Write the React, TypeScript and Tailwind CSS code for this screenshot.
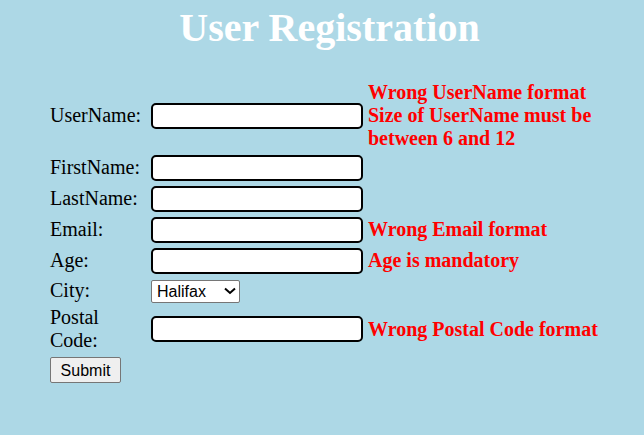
import { useState } from 'react';

const serif = "font-['Liberation_Serif','Times_New_Roman',serif]";
const sans = "font-['Liberation_Sans',Arial,sans-serif]";

type Field = {
    label: string;
    name: string;
    error?: string;
    height: string;
};

const fields: Field[] = [
    { label: 'UserName:', name: 'username', error: 'Wrong UserName format Size of UserName must be between 6 and 12', height: 'h-[71px]' },
    { label: 'FirstName:', name: 'firstname', height: 'h-[29px]' },
    { label: 'LastName:', name: 'lastname', height: 'h-[29px]' },
    { label: 'Email:', name: 'email', error: 'Wrong Email format', height: 'h-[29px]' },
    { label: 'Age:', name: 'age', error: 'Age is mandatory', height: 'h-[29px]' },
];

function TextInput({ name }: { name: string }) {
    return (
        <input
            name={name}
            type="text"
            className="w-[212px] h-[26px] bg-white border-2 border-black rounded-[5px] px-1 text-[13px] outline-none"
        />
    );
}

export default function App() {
    const [city, setCity] = useState('Halifax');

    return (
        <div className={`min-h-screen w-full bg-[#add8e6] text-black ${serif} text-[20px] leading-[23px]`}>
            <h1 className="pt-[5px] pl-[15px] text-center text-[40px] leading-[46px] font-bold text-white">
                User Registration
            </h1>

            <form className="mt-[29px] ml-[50px] flex flex-col gap-[2px]" onSubmit={(e) => e.preventDefault()}>
                {fields.map((f) => (
                    <div key={f.name} className={`flex items-center ${f.height}`}>
                        <label className="w-[101px] shrink-0">{f.label}</label>
                        <TextInput name={f.name} />
                        {f.error && (
                            <span className="ml-[5px] w-[240px] font-bold text-[#ff0000]">
                                {f.name === 'username' ? (
                                    <>
                                        Wrong UserName format<br />
                                        Size of UserName must be between 6 and 12
                                    </>
                                ) : (
                                    f.error
                                )}
                            </span>
                        )}
                    </div>
                ))}

                {/* City */}
                <div className="flex items-center h-[27px]">
                    <label className="w-[101px] shrink-0">City:</label>
                    <div className="relative">
                        <select
                            value={city}
                            onChange={(e) => setCity(e.target.value)}
                            className={`appearance-none w-[89px] h-[23px] bg-white border border-[#767676] rounded-[2px] pl-[5px] text-[16px] leading-[21px] ${sans}`}
                        >
                            <option>Halifax</option>
                            <option>Toronto</option>
                            <option>Montreal</option>
                            <option>Vancouver</option>
                        </select>
                        <svg
                            viewBox="0 0 12 8"
                            className="absolute right-[4px] top-[8px] w-[12px] h-[8px] pointer-events-none"
                            fill="none"
                            stroke="#000"
                            strokeWidth="2"
                        >
                            <path d="M1 1.5 L6 6 L11 1.5" />
                        </svg>
                    </div>
                </div>

                {/* Postal Code */}
                <div className="flex items-center h-[46px]">
                    <label className="w-[101px] shrink-0 pr-[40px]">Postal Code:</label>
                    <TextInput name="postal" />
                    <span className="ml-[5px] font-bold text-[#ff0000] whitespace-nowrap">Wrong Postal Code format</span>
                </div>

                <div className="mt-[3px]">
                    <button
                        type="submit"
                        className={`w-[71px] h-[26px] bg-[#efefef] border border-[#767676] rounded-[2px] text-[16px] ${sans}`}
                    >
                        Submit
                    </button>
                </div>
            </form>
        </div>
    );
}
